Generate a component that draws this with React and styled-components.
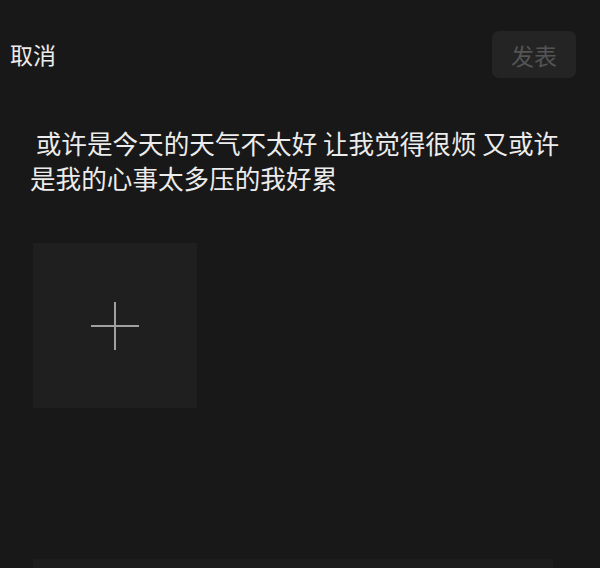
import React from "react";
import styled, { createGlobalStyle } from "styled-components";

const Global = createGlobalStyle`
  html, body { margin: 0; padding: 0; background: #181818; }
  body { font-family: "Noto Sans CJK SC", "Noto Sans", sans-serif; }
  * { box-sizing: border-box; }
`;

const Page = styled.div`
  width: 600px;
  height: 568px;
  overflow: hidden;
  background: #181818;
  display: flex;
  flex-direction: column;
  & > * { flex-shrink: 0; }
`;

const Header = styled.div`
  display: flex;
  align-items: center;
  justify-content: space-between;
  padding: 31px 24px 0 10px;
`;

const Cancel = styled.span`
  font-size: 23px;
  line-height: 47px;
  color: #ececec;
`;

const PublishButton = styled.button`
  width: 84px;
  height: 47px;
  border: none;
  border-radius: 7px;
  background: #242424;
  color: #545454;
  font-family: inherit;
  font-size: 23px;
  padding: 0;
`;

const Content = styled.p`
  margin: 47px 0 0 0;
  padding: 0 30px;
  font-size: 25.6px;
  line-height: 35px;
  color: #ececec;
  white-space: pre-wrap;
`;

const AddTile = styled.div`
  margin: 48px 0 0 33px;
  width: 164px;
  height: 165px;
  background: #1f1f1f;
  display: flex;
  align-items: center;
  justify-content: center;
`;

const BottomCard = styled.div`
  margin: 151px 0 0 33px;
  width: 520px;
  height: 60px;
  background: #1d1d1d;
`;

export default function App() {
  return (
    <>
      <Global />
      <Page>
        <Header>
          <Cancel>取消</Cancel>
          <PublishButton>发表</PublishButton>
        </Header>
        <Content>{" 或许是今天的天气不太好 让我觉得很烦 又或许是我的心事太多压的我好累"}</Content>
        <AddTile>
          <svg width="50" height="50" viewBox="0 0 50 50">
            <path d="M25 1v48M1 25h48" stroke="#a0a0a0" strokeWidth="2" fill="none" />
          </svg>
        </AddTile>
        <BottomCard />
      </Page>
    </>
  );
}
